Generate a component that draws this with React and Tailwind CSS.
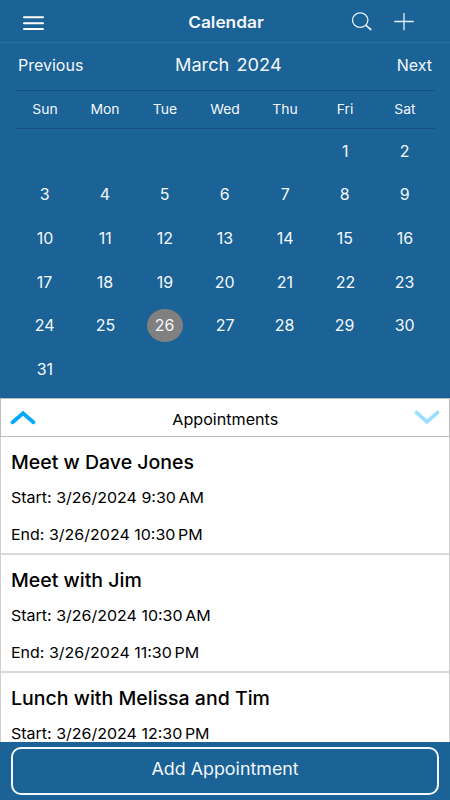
const weekdays = ["Sun", "Mon", "Tue", "Wed", "Thu", "Fri", "Sat"];

// March 2024 starts on a Friday
const blanks = Array.from({ length: 5 }, (_, i) => i);
const days = Array.from({ length: 31 }, (_, i) => i + 1);
const selected = 26;

const appointments = [
  { title: "Meet w Dave Jones", start: ["3/26/2024 9:30", "AM"], end: ["3/26/2024 10:30", "PM"] },
  { title: "Meet with Jim", start: ["3/26/2024 10:30", "AM"], end: ["3/26/2024 11:30", "PM"] },
  { title: "Lunch with Melissa and Tim", start: ["3/26/2024 12:30", "PM"] },
];

function Header() {
  return (
    <header className="flex h-[43px] shrink-0 items-center border-b border-[#286fa3]">
      <button className="ml-[23px] w-[21px] pt-[3px]">
        <svg width="21" height="16" viewBox="0 0 21 16" stroke="#fff" strokeWidth="2" strokeLinecap="round">
          <path d="M1 2.3h19M1 8.2h19M1 14.1h19" />
        </svg>
      </button>
      <h1 className="ml-[144px] w-[75px] pt-px text-center text-[16px] font-semibold">
        <span className="inline-block scale-x-[1.08]">Calendar</span>
      </h1>
      <button className="ml-[88px]">
        <svg width="22" height="20" viewBox="0 0 22 20" fill="none" stroke="#e3f0fa" strokeWidth="1.3">
          <ellipse cx="9.2" cy="9.1" rx="7.7" ry="7.3" />
          <path d="M14.7 14.2l5.6 4.8" strokeWidth="1.7" />
        </svg>
      </button>
      <button className="ml-5">
        <svg width="22" height="20" viewBox="0 0 22 20" stroke="#e3f0fa" strokeWidth="1.3">
          <path d="M1.2 10.5h19.6M11 2v17.2" />
        </svg>
      </button>
    </header>
  );
}

function MonthView() {
  return (
    <section className="h-[355px] shrink-0 px-[15px]">
      <div className="flex h-[48px] items-center justify-between border-b border-[#17507f] px-[3px] pb-[3px] text-[16px]">
        <button className="w-[80px] text-left">Previous</button>
        <h2 className="pl-[6px] pt-px text-[17.5px]">
          <span className="inline-block scale-x-[1.04] [word-spacing:2px]">March 2024</span>
        </h2>
        <button className="w-[80px] text-right">Next</button>
      </div>
      <div className="grid h-[38px] grid-cols-7 items-center border-b border-[#17507f] pt-px text-center text-[13px]">
        {weekdays.map((d) => (
          <span key={d} className="scale-x-[1.07]">{d}</span>
        ))}
      </div>
      <div className="grid h-[262px] grid-cols-7 grid-rows-6 text-center text-[15.5px]">
        {blanks.map((b) => (
          <span key={b} />
        ))}
        {days.map((d) => (
          <button key={d} className="flex items-center justify-center pt-px">
            <span
              className={
                d === selected
                  ? "flex h-[33px] w-9 items-center justify-center rounded-[50%] bg-[#808080]"
                  : ""
              }
            >
              <span className="inline-block scale-x-[1.03]">{d}</span>
            </span>
          </button>
        ))}
      </div>
    </section>
  );
}

function Time({ label, value }) {
  return (
    <p className="h-[37.4px] whitespace-nowrap text-[15px] leading-[22px]">
      <span className="inline-block origin-left scale-x-[1.066]">
        {label}: {value[0]}
        <span className="ml-[2.5px]">{value[1]}</span>
      </span>
    </p>
  );
}

function Appointment({ item }) {
  return (
    <li className="h-[118px] shrink-0 border-b-2 border-[#dadada] pl-[10px] pt-[12.4px]">
      <h3 className="h-[37.3px] whitespace-nowrap text-[18.5px] font-medium leading-[26px]">
        <span className="inline-block origin-left scale-x-[1.055]">{item.title}</span>
      </h3>
      <Time label="Start" value={item.start} />
      {item.end && <Time label="End" value={item.end} />}
    </li>
  );
}

export default function App() {
  return (
    <div className="flex h-[800px] w-[450px] flex-col overflow-hidden bg-[#1b6296] font-['Inter',sans-serif] text-[#f4f8fc]">
      <Header />
      <MonthView />
      <div className="flex h-[39px] shrink-0 items-center justify-between border border-[#bdbdbd] bg-white px-[8.5px] text-black">
        <svg width="26" height="16" viewBox="0 0 26 16" fill="none" stroke="#03a9fc" strokeWidth="3.8" strokeLinecap="round">
          <path d="M2.6 12.2L13 3.2l10.4 9" />
        </svg>
        <span className="scale-x-[1.075] pt-[5px] text-[15px]">Appointments</span>
        <svg width="26" height="16" viewBox="0 0 26 16" fill="none" stroke="#9adeff" strokeWidth="3.8" strokeLinecap="round">
          <path d="M2.6 2.6L13 11.8l10.4-9.2" />
        </svg>
      </div>
      <ul className="flex h-[305px] shrink-0 flex-col overflow-hidden border-x border-[#cfcfcf] bg-white text-black">
        {appointments.map((a) => (
          <Appointment key={a.title} item={a} />
        ))}
      </ul>
      <footer className="flex-1 pl-[11px] pr-[11px] pt-[5px]">
        <button className="h-[48px] w-full rounded-[10px] border-2 border-[#f4f8fc] pb-[3px] text-[17px]">
          <span className="inline-block scale-x-[1.05]">Add Appointment</span>
        </button>
      </footer>
    </div>
  );
}
